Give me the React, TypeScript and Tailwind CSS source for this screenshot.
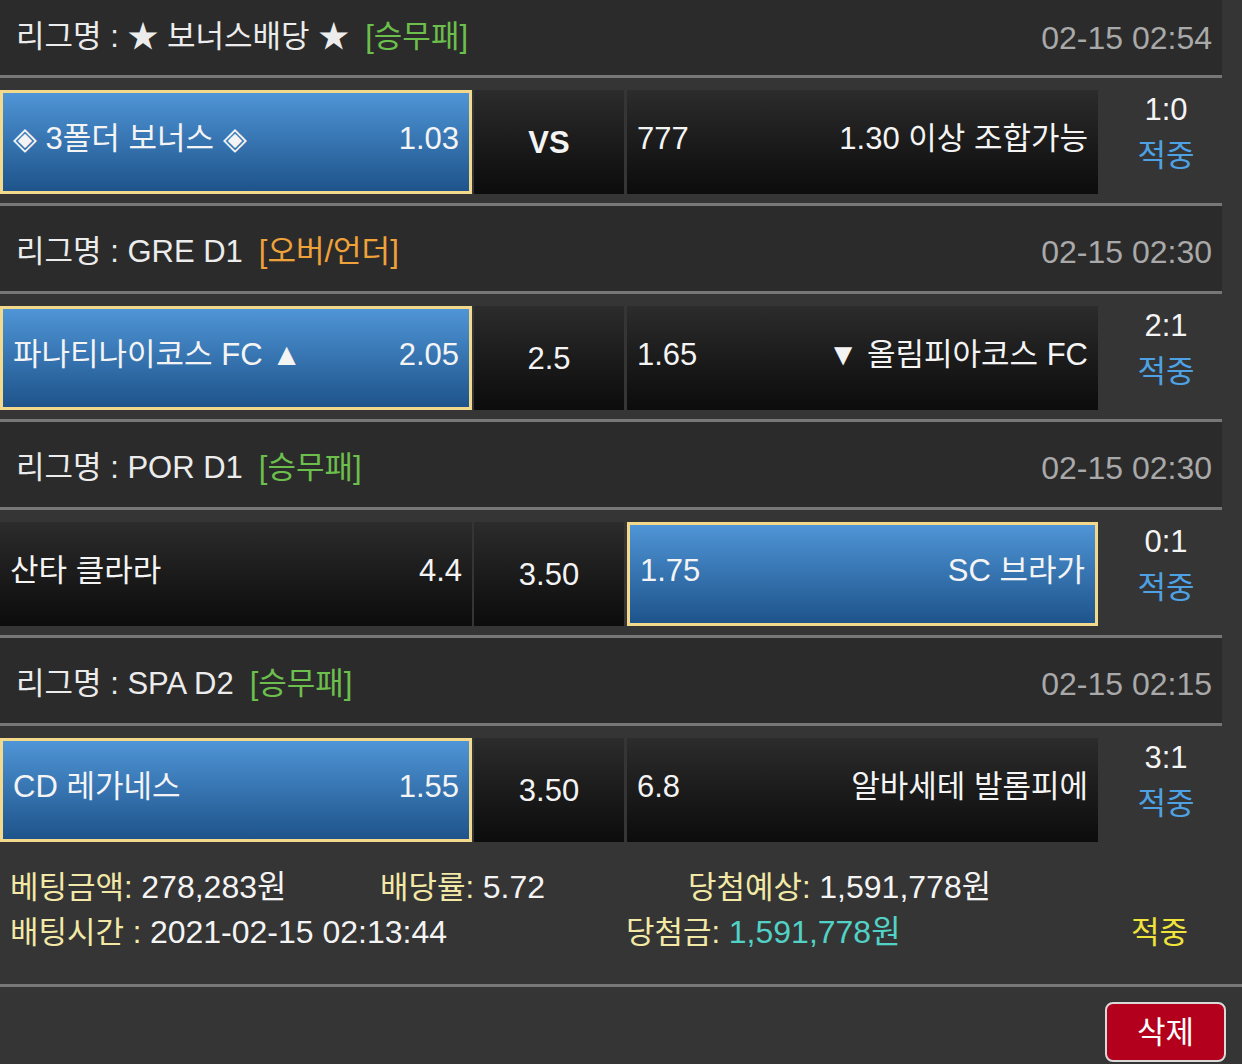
import React from 'react';

type Bet = {
  league: string;
  type: string;
  typeColor: string;
  time: string;
  home: string;
  homeOdds: string;
  mid: string;
  awayOdds: string;
  away: string;
  pick: 'home' | 'away';
  score: string;
};

const bets: Bet[] = [
  {
    league: '★ 보너스배당 ★',
    type: '[승무패]',
    typeColor: 'text-[#6cbf4c]',
    time: '02-15 02:54',
    home: '◈ 3폴더 보너스 ◈',
    homeOdds: '1.03',
    mid: 'VS',
    awayOdds: '777',
    away: '1.30 이상 조합가능',
    pick: 'home',
    score: '1:0',
  },
  {
    league: 'GRE D1',
    type: '[오버/언더]',
    typeColor: 'text-[#f0a23a]',
    time: '02-15 02:30',
    home: '파나티나이코스 FC ▲',
    homeOdds: '2.05',
    mid: '2.5',
    awayOdds: '1.65',
    away: '▼ 올림피아코스 FC',
    pick: 'home',
    score: '2:1',
  },
  {
    league: 'POR D1',
    type: '[승무패]',
    typeColor: 'text-[#6cbf4c]',
    time: '02-15 02:30',
    home: '산타 클라라',
    homeOdds: '4.4',
    mid: '3.50',
    awayOdds: '1.75',
    away: 'SC 브라가',
    pick: 'away',
    score: '0:1',
  },
  {
    league: 'SPA D2',
    type: '[승무패]',
    typeColor: 'text-[#6cbf4c]',
    time: '02-15 02:15',
    home: 'CD 레가네스',
    homeOdds: '1.55',
    mid: '3.50',
    awayOdds: '6.8',
    away: '알바세테 발롬피에',
    pick: 'home',
    score: '3:1',
  },
];

const cellBase = 'h-[104px] flex items-center justify-between px-[10px] pb-[6px] text-[#f4f4f4]';
const blackCell = 'bg-linear-to-b from-[#2c2c2c] to-[#0c0c0c]';
const blueCell = 'bg-linear-to-b from-[#4f95d7] to-[#1e548b] border-[3px] border-[#f3d98c]';

const Line = () => <div className="h-[3px] w-[1222px] bg-[#777777]" />;

const BetBlock: React.FC<{ bet: Bet; first: boolean; last: boolean }> = ({ bet, first, last }) => (
  <div>
    <div
      className={`w-[1222px] bg-[#2b2b2b] flex items-center justify-between pl-[16px] pr-[10px] ${
        first ? 'h-[75px]' : 'h-[85px] pt-[7px]'
      }`}
    >
      <div className="flex items-center">
        <span className="text-[#ececec]">리그명 : {bet.league}</span>
        <span className={`ml-[16px] ${bet.typeColor}`}>{bet.type}</span>
      </div>
      <span className="text-[#a9a9a9] text-[32px]">{bet.time}</span>
    </div>
    <Line />
    <div className="w-[1222px] h-[125px] pt-[12px] flex">
      <div className={`w-[472px] ${cellBase} ${bet.pick === 'home' ? blueCell : blackCell}`}>
        <span>{bet.home}</span>
        <span>{bet.homeOdds}</span>
      </div>
      <div className={`ml-[2px] w-[150px] ${cellBase} justify-center ${blackCell} ${bet.mid === 'VS' ? 'font-bold' : ''}`}>
        <span className="pt-[8px]">{bet.mid}</span>
      </div>
      <div className={`ml-[3px] w-[471px] ${cellBase} ${bet.pick === 'away' ? blueCell : blackCell}`}>
        <span>{bet.awayOdds}</span>
        <span>{bet.away}</span>
      </div>
      <div className="flex-1 pl-[12px] flex flex-col items-center leading-[46px] -mt-[3px]">
        <span className="text-[#f4f4f4]">{bet.score}</span>
        <span className="text-[#4ea2e4]">적중</span>
      </div>
    </div>
    {!last && <Line />}
  </div>
);

export default function App() {
  return (
    <div className="w-[1242px] h-[1064px] overflow-hidden bg-[#353535] text-[31px] font-['Liberation_Sans','Noto_Sans_CJK_KR',sans-serif]">
      {bets.map((bet, i) => (
        <BetBlock key={i} bet={bet} first={i === 0} last={i === bets.length - 1} />
      ))}

      <div className="pl-[10px] pt-[14px] pb-[29px] leading-[45px]">
        <div className="flex">
          <span className="w-[370px]">
            <span className="text-[#f2e9a6]">베팅금액: </span>
            <span className="text-[#f4f4f4] text-[32px]">278,283원</span>
          </span>
          <span className="w-[308px]">
            <span className="text-[#f2e9a6]">배당률: </span>
            <span className="text-[#f4f4f4] text-[32px]">5.72</span>
          </span>
          <span>
            <span className="text-[#f2e9a6]">당첨예상: </span>
            <span className="text-[#f4f4f4] text-[32px]">1,591,778원</span>
          </span>
        </div>
        <div className="flex">
          <span className="w-[616px]">
            <span className="text-[#f2e9a6]">배팅시간 : </span>
            <span className="text-[#f4f4f4] text-[32px]">2021-02-15 02:13:44</span>
          </span>
          <span className="w-[505px]">
            <span className="text-[#f2e9a6]">당첨금: </span>
            <span className="text-[#52d2c6] text-[32px]">1,591,778원</span>
          </span>
          <span className="text-[#efe33c]">적중</span>
        </div>
      </div>

      <div className="h-[3px] w-full bg-[#777777]" />

      <div className="flex justify-end pt-[15px] pr-[16px]">
        <button className="w-[121px] h-[60px] rounded-[8px] border-[2px] border-[#d9d9d9] bg-[#b3001c] text-white text-[31px] leading-none">
          삭제
        </button>
      </div>
    </div>
  );
}
